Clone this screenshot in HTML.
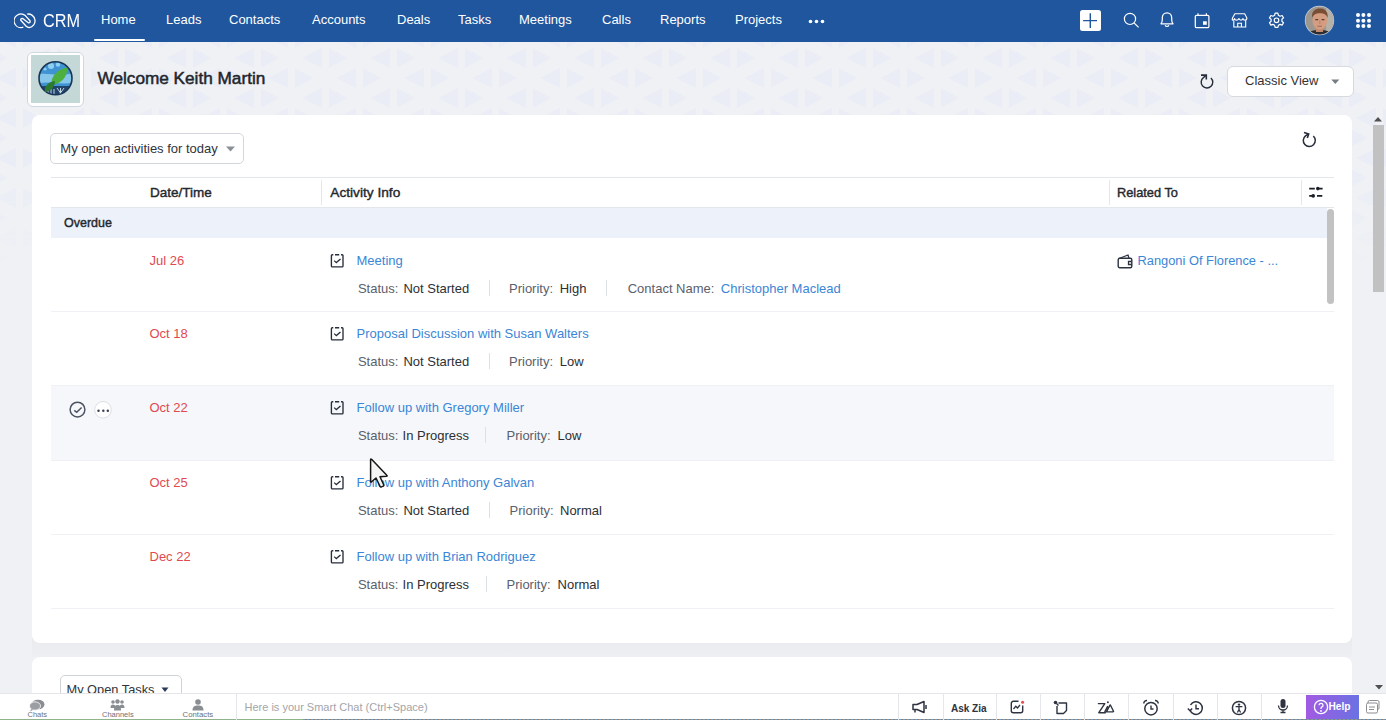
<!DOCTYPE html>
<html><head><meta charset="utf-8">
<style>
*{margin:0;padding:0;box-sizing:border-box}
html,body{width:1386px;height:720px;overflow:hidden}
body{font-family:"Liberation Sans",sans-serif;background:#eff1f5;position:relative;color:#2c2f35}
.a{position:absolute;white-space:nowrap}
#nav{position:absolute;left:0;top:0;width:1386px;height:42px;background:#1f569e}
.ni{position:absolute;top:12px;font-size:13px;color:#fff;line-height:16px}
#card{position:absolute;left:32px;top:114.5px;width:1320px;height:528px;background:#fff;border-radius:8px}
#card2{position:absolute;left:32px;top:657px;width:1320px;height:80px;background:#fff;border-radius:8px}
.t13{font-size:13px;line-height:16px}
.lnk{color:#3b86d6}
.red{color:#df4a4f}
.lbl{color:#5a606b}
.val{color:#2c2f35}
.row{position:absolute;left:51px;width:1283px;height:74px;border-bottom:1px solid #eceef2}
.sb{-webkit-text-stroke:0.4px #24272d}
.sep{position:absolute;width:1px;height:16px;background:#dde0e5}
</style></head><body>

<svg class="a" style="left:0;top:42px" width="1386" height="220"><defs><pattern id="tri" width="68" height="40" patternUnits="userSpaceOnUse" patternTransform="translate(30,6)"><g fill="#eaedf5"><path d="M0 10L20 0V20Z"/><path d="M27 0L45 10L27 20Z"/><path d="M34 30L54 20V40Z"/><path d="M61 20L79 30L61 40Z"/><path d="M-7 20L11 30L-7 40Z"/></g></pattern><linearGradient id="fade" x1="0" y1="0" x2="0" y2="1"><stop offset="0" stop-color="#fff"/><stop offset="0.6" stop-color="#fff"/><stop offset="1" stop-color="#000"/></linearGradient><mask id="mk"><rect width="1386" height="220" fill="url(#fade)"/></mask></defs><rect width="1386" height="220" fill="url(#tri)" mask="url(#mk)"/></svg>
<div id="nav">
  <svg class="a" style="left:14px;top:13px" width="23" height="16" viewBox="0 0 23 16"><path d="M9.3,14.2 A6.8,6.8 0 1 1 11.3,2.6 L16,7.8 Q16.6,9.7 14.6,9.9 L8.4,5.3 Q6.4,5.3 6.8,7.3 L12.2,13.3 Q13.5,14.6 15.2,14.6 A6.8,6.8 0 1 0 13.2,1.1" fill="none" stroke="#fff" stroke-width="1.3" stroke-linejoin="round"/></svg>
  <div class="a" style="left:42.5px;top:12px;font-size:17.5px;color:#fff;line-height:18px;transform:scaleX(0.93);transform-origin:0 0">CRM</div>
  <div class="ni" style="left:101px">Home</div>
  <div class="a" style="left:94px;top:39px;width:51px;height:2px;background:#fff;border-radius:1px"></div>
  <div class="ni" style="left:166px">Leads</div>
  <div class="ni" style="left:229px">Contacts</div>
  <div class="ni" style="left:312px">Accounts</div>
  <div class="ni" style="left:397px">Deals</div>
  <div class="ni" style="left:458px">Tasks</div>
  <div class="ni" style="left:519px">Meetings</div>
  <div class="ni" style="left:602px">Calls</div>
  <div class="ni" style="left:660px">Reports</div>
  <div class="ni" style="left:735px">Projects</div>
  <svg class="a" style="left:808px;top:19px" width="17" height="5"><circle cx="2.5" cy="2.5" r="1.8" fill="#fff"/><circle cx="8.5" cy="2.5" r="1.8" fill="#fff"/><circle cx="14.5" cy="2.5" r="1.8" fill="#fff"/></svg>
  <div class="a" style="left:1079.5px;top:9.7px;width:21.5px;height:21.7px;background:#fff;border-radius:2.5px"></div>
  <svg class="a" style="left:1079px;top:10px" width="22" height="22"><path d="M11.3 3.3V17.9M4.1 10.6H18" stroke="#1f569e" stroke-width="1.45"/></svg>
  <svg class="a" style="left:1120px;top:10px" width="22" height="22" viewBox="0 0 22 22"><circle cx="10" cy="8.9" r="5.6" fill="none" stroke="#fff" stroke-width="1.2"/><path d="M14 12.9L18.6 17.4" stroke="#fff" stroke-width="1.3"/></svg>
  <svg class="a" style="left:1157px;top:10px" width="20" height="20" viewBox="0 0 20 20"><path d="M4 13.8C5.2 12.6 5.3 11.8 5.3 9.5V7.8C5.3 4.9 7.3 2.9 10 2.9S14.7 4.9 14.7 7.8V9.5C14.7 11.8 14.8 12.6 16 13.8Z" fill="none" stroke="#fff" stroke-width="1.25" stroke-linejoin="round"/><path d="M8.2 15.2A1.9 1.9 0 0 0 11.8 15.2" fill="none" stroke="#fff" stroke-width="1.25"/></svg>
  <svg class="a" style="left:1192px;top:10px" width="20" height="20" viewBox="0 0 20 20"><rect x="3.3" y="5.3" width="13.6" height="12.4" rx="1.3" fill="none" stroke="#fff" stroke-width="1.25"/><path d="M6 3.3V6M14.4 3.3V6" stroke="#fff" stroke-width="1.2"/><rect x="11" y="11.3" width="3.8" height="3.5" fill="#fff"/></svg>
  <svg class="a" style="left:1230.3px;top:10.7px" width="19.5" height="18.6" viewBox="0 0 21 20"><path d="M5.2 3H15.8L18.2 7.5C18.2 9 17.1 9.8 16 9.8C14.9 9.8 14.1 9 14 8C13.8 9 12.9 9.8 11.8 9.8C10.7 9.8 9.8 9 9.6 8C9.4 9 8.6 9.8 7.4 9.8C6.3 9.8 5.1 9 5 8C4.8 9 4 9.8 3 9.8C1.9 9.8 2.6 9 2.7 7.5Z" fill="none" stroke="#fff" stroke-width="1.2" stroke-linejoin="round"/><path d="M4.1 10V17.2H16.9V10" fill="none" stroke="#fff" stroke-width="1.2"/><path d="M8.3 17.2V13.2H12.3V17.2" fill="none" stroke="#fff" stroke-width="1.2"/></svg>
  <svg class="a" style="left:1266px;top:10px" width="21" height="21" viewBox="0 0 21 21"><path d="M9.1 3.2H11.9L12.4 5.3L14.1 6.2L16.1 5.5L17.5 7.9L15.9 9.3V11.3L17.5 12.7L16.1 15.1L14.1 14.4L12.4 15.3L11.9 17.4H9.1L8.6 15.3L6.9 14.4L4.9 15.1L3.5 12.7L5.1 11.3V9.3L3.5 7.9L4.9 5.5L6.9 6.2L8.6 5.3Z" fill="none" stroke="#fff" stroke-width="1.2" stroke-linejoin="round"/><circle cx="10.5" cy="10.3" r="2.3" fill="none" stroke="#fff" stroke-width="1.2"/></svg>
  <svg class="a" style="left:1304px;top:5px" width="31" height="31" viewBox="0 0 31 31"><defs><clipPath id="av"><circle cx="15.5" cy="15.5" r="14"/></clipPath></defs><circle cx="15.5" cy="15.5" r="14.7" fill="#cfd3da"/><g clip-path="url(#av)"><rect width="31" height="31" fill="#9d978f"/><rect x="22" width="9" height="31" fill="#b5b0a8"/><path d="M3 31C4 26 9 25 15.5 25S27 26 28 31Z" fill="#2a2d31"/><path d="M12 22H19V27H12Z" fill="#c28a70"/><ellipse cx="15.8" cy="15.5" rx="7.4" ry="9.2" fill="#d49c80"/><path d="M8 13C7.5 6 11 3.5 16 3.5S24 6 23.8 13C22.5 9.5 20 8.3 16 8.3S9.5 9.5 8 13Z" fill="#7a4e35"/><path d="M11.3 14.6H14.2M17.6 14.6H20.4" stroke="#5c3b2c" stroke-width="1.1"/><path d="M15.8 15.5V19" stroke="#b57a62" stroke-width="0.8"/><path d="M13.5 21.2H18" stroke="#9a5e50" stroke-width="0.9"/></g></svg>
  <svg class="a" style="left:1354px;top:13px" width="18" height="16" viewBox="0 0 18 16"><g fill="#fff"><circle cx="4" cy="2.1" r="2"/><circle cx="9.4" cy="2.1" r="2"/><circle cx="15" cy="2.1" r="2"/><circle cx="4" cy="7.7" r="2"/><circle cx="9.4" cy="7.7" r="2"/><circle cx="15" cy="7.7" r="2"/><circle cx="4" cy="13.1" r="2"/><circle cx="9.4" cy="13.1" r="2"/><circle cx="15" cy="13.1" r="2"/></g></svg>
</div>

<!-- welcome -->
<div class="a" style="left:27px;top:52px;width:57px;height:55px;background:#fff;border:1px solid #cfd7e3;border-radius:6px"></div>
<div class="a" style="left:31px;top:56px;width:48px;height:46px;background:#b9d3d3"></div>
<div class="a sb" style="left:97.5px;top:69px;font-size:17.2px;color:#22252c;line-height:18px;-webkit-text-stroke:0.5px #22252c">Welcome Keith Martin</div>
<div class="a" style="left:1226.5px;top:65.5px;width:127px;height:31px;background:#fff;border:1px solid #d6d9de;border-radius:6px"></div>
<div class="a t13" style="left:1245px;top:73px;color:#333">Classic View</div>

<div class="a" style="left:32px;top:636px;width:1320px;height:21px;background:linear-gradient(#e8eaee,#edeff3)"></div><div id="card"></div>
<div class="a" style="left:50px;top:133px;width:194px;height:31px;border:1px solid #d3d7dd;border-radius:5px;background:#fff"></div>
<div class="a t13" style="left:60.3px;top:141px;color:#30343b">My open activities for today</div>
<svg class="a" style="left:226px;top:146px" width="9" height="6"><path d="M0 0.5H9L4.5 5.5Z" fill="#8a8f98"/></svg>
<svg class="a" style="left:1297px;top:127px" width="24" height="24" viewBox="0 0 24 24"><path d="M16.3 9A6 6 0 1 1 8.5 8.8L11.5 7" fill="none" stroke="#262d3b" stroke-width="1.5"/><path d="M7 5.5L11.7 7L10.3 11" fill="none" stroke="#262d3b" stroke-width="1.6"/></svg>
<div class="a" style="left:51px;top:177px;width:1283px;height:1px;background:#e3e6ea"></div>
<div class="a" style="left:51px;top:207px;width:1283px;height:1px;background:#e3e6ea"></div>
<div class="a" style="left:321px;top:180px;width:1px;height:25px;background:#e3e6ea"></div>
<div class="a" style="left:1109px;top:180px;width:1px;height:25px;background:#e3e6ea"></div>
<div class="a" style="left:1301px;top:180px;width:1px;height:25px;background:#e3e6ea"></div>
<div class="a sb" style="left:150px;top:185px;font-size:13.5px;color:#24272d;line-height:16px">Date/Time</div>
<div class="a sb" style="left:330.3px;top:185px;font-size:13.7px;color:#24272d;line-height:16px">Activity Info</div>
<div class="a sb" style="left:1117px;top:185px;font-size:12.8px;color:#24272d;line-height:16px">Related To</div>
<svg class="a" style="left:1308px;top:184px" width="16" height="16" viewBox="0 0 16 16"><path d="M1.2 4.6H6.8M9.6 4.6H14.6M1.2 11.9H5.3M9 11.9H14.3" stroke="#1a1e27" stroke-width="1.6"/><circle cx="9.8" cy="4.6" r="1.8" fill="#1a1e27"/><circle cx="5.2" cy="11.9" r="1.8" fill="#1a1e27"/></svg>
<div class="a" style="left:51px;top:208px;width:1276px;height:30px;background:#ecf1fa"></div>
<div class="a sb" style="left:64px;top:216px;font-size:12.5px;color:#24272d;line-height:14px">Overdue</div>
<div class="a" style="left:51px;top:311px;width:1283px;height:1px;background:#f0f1f4"></div>
<div class="a t13 red" style="left:149.5px;top:253px">Jul 26</div>
<svg class="a" style="left:330px;top:253px" width="15" height="15" viewBox="0 0 15 15"><path d="M3.3 1.7H2.3A0.9 0.9 0 0 0 1.4 2.6V12.9A0.9 0.9 0 0 0 2.3 13.8H12.1A0.9 0.9 0 0 0 13 12.9V2.6A0.9 0.9 0 0 0 12.1 1.7H11M5 1.7H9.2" fill="none" stroke="#262d3b" stroke-width="1.35"/><path d="M4.2 7.6L6.3 9.6L10.5 5.9" fill="none" stroke="#262d3b" stroke-width="1.3"/></svg>
<div class="a t13 lnk" style="left:356.5px;top:253px">Meeting</div>
<div class="a t13 lbl" style="left:357.9px;top:281px">Status:</div>
<div class="a t13 val" style="left:403.4px;top:281px">Not Started</div>
<div class="sep" style="left:488.7px;top:280px"></div>
<div class="a t13 lbl" style="left:509px;top:281px">Priority:</div>
<div class="a t13 val" style="left:559.7px;top:281px">High</div>
<div class="sep" style="left:606px;top:280px"></div>
<div class="a t13 lbl" style="left:627.7px;top:281px">Contact Name:</div>
<div class="a t13 val" style="left:720.8px;top:281px"><span class="lnk">Christopher Maclead</span></div>
<svg class="a" style="left:1117px;top:253px" width="17" height="16" viewBox="0 0 17 16"><path d="M2 5.5L11 2L12 5" fill="none" stroke="#2d3340" stroke-width="1.3"/><rect x="1.2" y="5.2" width="13.6" height="9.6" rx="1.5" fill="none" stroke="#2d3340" stroke-width="1.4"/><path d="M15 8.5H11.5V11.5H15" fill="none" stroke="#2d3340" stroke-width="1.3"/></svg>
<div class="a lnk" style="font-size:12.85px;line-height:16px;left:1137.5px;top:253px">Rangoni Of Florence - ...</div>
<div class="a" style="left:51px;top:385px;width:1283px;height:1px;background:#f0f1f4"></div>
<div class="a t13 red" style="left:149.5px;top:326px">Oct 18</div>
<svg class="a" style="left:330px;top:326px" width="15" height="15" viewBox="0 0 15 15"><path d="M3.3 1.7H2.3A0.9 0.9 0 0 0 1.4 2.6V12.9A0.9 0.9 0 0 0 2.3 13.8H12.1A0.9 0.9 0 0 0 13 12.9V2.6A0.9 0.9 0 0 0 12.1 1.7H11M5 1.7H9.2" fill="none" stroke="#262d3b" stroke-width="1.35"/><path d="M4.2 7.6L6.3 9.6L10.5 5.9" fill="none" stroke="#262d3b" stroke-width="1.3"/></svg>
<div class="a t13 lnk" style="left:356.5px;top:326px">Proposal Discussion with Susan Walters</div>
<div class="a t13 lbl" style="left:357.9px;top:354px">Status:</div>
<div class="a t13 val" style="left:403.4px;top:354px">Not Started</div>
<div class="sep" style="left:488.7px;top:353px"></div>
<div class="a t13 lbl" style="left:509px;top:354px">Priority:</div>
<div class="a t13 val" style="left:559.7px;top:354px">Low</div>
<div class="a" style="left:51px;top:386px;width:1283px;height:74px;background:#f5f7fa"></div>
<div class="a" style="left:51px;top:460px;width:1283px;height:1px;background:#f0f1f4"></div>
<div class="a t13 red" style="left:149.5px;top:400px">Oct 22</div>
<svg class="a" style="left:330px;top:400px" width="15" height="15" viewBox="0 0 15 15"><path d="M3.3 1.7H2.3A0.9 0.9 0 0 0 1.4 2.6V12.9A0.9 0.9 0 0 0 2.3 13.8H12.1A0.9 0.9 0 0 0 13 12.9V2.6A0.9 0.9 0 0 0 12.1 1.7H11M5 1.7H9.2" fill="none" stroke="#262d3b" stroke-width="1.35"/><path d="M4.2 7.6L6.3 9.6L10.5 5.9" fill="none" stroke="#262d3b" stroke-width="1.3"/></svg>
<div class="a t13 lnk" style="left:356.5px;top:400px">Follow up with Gregory Miller</div>
<div class="a t13 lbl" style="left:357.9px;top:428px">Status:</div>
<div class="a t13 val" style="left:402.6px;top:428px">In Progress</div>
<div class="sep" style="left:485.3px;top:427px"></div>
<div class="a t13 lbl" style="left:506.5px;top:428px">Priority:</div>
<div class="a t13 val" style="left:557.6px;top:428px">Low</div>
<svg class="a" style="left:68px;top:400px" width="19" height="19" viewBox="0 0 19 19"><circle cx="9.5" cy="9.6" r="7.4" fill="none" stroke="#4a5160" stroke-width="1.45"/><path d="M6.3 10.4L8.7 12.3L13.6 7.6" fill="none" stroke="#4a5160" stroke-width="1.45"/></svg>
<svg class="a" style="left:94px;top:401px" width="19" height="19" viewBox="0 0 19 19"><circle cx="9" cy="8.8" r="8.3" fill="#fff" stroke="#dcdfe4" stroke-width="1"/><circle cx="4.5" cy="9.8" r="1.25" fill="#3a4150"/><circle cx="9.3" cy="9.8" r="1.25" fill="#3a4150"/><circle cx="13.8" cy="9.8" r="1.25" fill="#3a4150"/></svg>
<div class="a" style="left:51px;top:534px;width:1283px;height:1px;background:#f0f1f4"></div>
<div class="a t13 red" style="left:149.5px;top:475px">Oct 25</div>
<svg class="a" style="left:330px;top:475px" width="15" height="15" viewBox="0 0 15 15"><path d="M3.3 1.7H2.3A0.9 0.9 0 0 0 1.4 2.6V12.9A0.9 0.9 0 0 0 2.3 13.8H12.1A0.9 0.9 0 0 0 13 12.9V2.6A0.9 0.9 0 0 0 12.1 1.7H11M5 1.7H9.2" fill="none" stroke="#262d3b" stroke-width="1.35"/><path d="M4.2 7.6L6.3 9.6L10.5 5.9" fill="none" stroke="#262d3b" stroke-width="1.3"/></svg>
<div class="a t13 lnk" style="left:356.5px;top:475px">Follow up with Anthony Galvan</div>
<div class="a t13 lbl" style="left:357.9px;top:503px">Status:</div>
<div class="a t13 val" style="left:403.4px;top:503px">Not Started</div>
<div class="sep" style="left:488.6px;top:502px"></div>
<div class="a t13 lbl" style="left:509.6px;top:503px">Priority:</div>
<div class="a t13 val" style="left:560px;top:503px">Normal</div>
<div class="a" style="left:51px;top:608px;width:1283px;height:1px;background:#f0f1f4"></div>
<div class="a t13 red" style="left:149.5px;top:549px">Dec 22</div>
<svg class="a" style="left:330px;top:549px" width="15" height="15" viewBox="0 0 15 15"><path d="M3.3 1.7H2.3A0.9 0.9 0 0 0 1.4 2.6V12.9A0.9 0.9 0 0 0 2.3 13.8H12.1A0.9 0.9 0 0 0 13 12.9V2.6A0.9 0.9 0 0 0 12.1 1.7H11M5 1.7H9.2" fill="none" stroke="#262d3b" stroke-width="1.35"/><path d="M4.2 7.6L6.3 9.6L10.5 5.9" fill="none" stroke="#262d3b" stroke-width="1.3"/></svg>
<div class="a t13 lnk" style="left:356.5px;top:549px">Follow up with Brian Rodriguez</div>
<div class="a t13 lbl" style="left:357.9px;top:577px">Status:</div>
<div class="a t13 val" style="left:402.6px;top:577px">In Progress</div>
<div class="sep" style="left:485.5px;top:576px"></div>
<div class="a t13 lbl" style="left:506.5px;top:577px">Priority:</div>
<div class="a t13 val" style="left:557.6px;top:577px">Normal</div>
<div class="a" style="left:1327px;top:209px;width:7px;height:95px;background:#c2c2c2;border-radius:4px"></div>

<div id="card2"></div>


<svg class="a" style="left:1195px;top:68px" width="24" height="24" viewBox="0 0 24 24"><path d="M15.9 9.9A5.8 5.8 0 1 1 8.4 9.6L11.2 7.3" fill="none" stroke="#262d3b" stroke-width="1.4"/><path d="M6 7.1H11.3V11.4" fill="none" stroke="#262d3b" stroke-width="1.6"/></svg>
<svg class="a" style="left:1330.5px;top:78.5px" width="9" height="6"><path d="M0.3 0.5H8.3L4.3 5Z" fill="#777c85"/></svg>
<svg class="a" style="left:31px;top:55px" width="49" height="48" viewBox="0 0 49 48"><rect width="49" height="48" fill="#c4d8d8"/><defs><clipPath id="lg"><circle cx="24.5" cy="23.3" r="16.5"/></clipPath></defs><g clip-path="url(#lg)"><rect width="49" height="48" fill="#3f93d3"/><circle cx="20" cy="11" r="3" fill="#8fd0f2"/><circle cx="27" cy="9.5" r="2.2" fill="#8fd0f2"/><circle cx="14" cy="14" r="1.6" fill="#8fd0f2"/><path d="M6 20C14 16 30 24 44 17V27C32 31 17 25 6 29Z" fill="#85c6ea"/><rect x="0" y="31" width="49" height="17" fill="#22436a"/><path d="M17 40V33M20 40V31M23 40V34M28 40L33 33M31 40L26 33M29.5 33V40" stroke="#d6e6f2" stroke-width="0.9"/></g><circle cx="24.5" cy="23.3" r="16.5" fill="none" stroke="#1b3556" stroke-width="1.6"/><path d="M20.5 30C19.5 22 26 14 36.5 12.5C36.5 22 30 29 20.5 30Z" fill="#4caf3f"/><path d="M14 37C13 31 17 27 24 26C24 32 20 36 14 37Z" fill="#2b7a30"/></svg>

<!-- card2 -->
<div class="a" style="left:59.5px;top:675px;width:122px;height:30px;border:1px solid #cfd3d9;border-radius:5px;background:#fff"></div>
<div class="a" style="left:66.5px;top:682px;font-size:12.8px;line-height:16px;color:#30343b">My Open Tasks</div>
<svg class="a" style="left:161px;top:687px" width="8" height="6"><path d="M0.5 0.5H7.5L4 5Z" fill="#2a3a5a"/></svg>

<!-- page scrollbar -->
<svg class="a" style="left:1373px;top:116px" width="10" height="6"><path d="M1 5.5H9L5 1Z" fill="#505050"/></svg>
<div class="a" style="left:1372.5px;top:124.5px;width:11px;height:167px;background:#c1c1c1"></div>
<svg class="a" style="left:1374px;top:684px" width="10" height="6"><path d="M1 1H9L5 5.5Z" fill="#505050"/></svg>

<!-- bottom bar -->
<div class="a" style="left:0;top:693px;width:1386px;height:27px;background:#fff;border-top:1px solid #e4e6ea"></div>
<div class="a" style="left:0;top:719px;width:303px;height:1px;background:#8fb48c"></div><div class="a" style="left:303px;top:719px;width:1083px;height:1px;background:repeating-linear-gradient(90deg,#6f9cc6 0 2px,#8e7e70 2px 4px)"></div>
<svg class="a" style="left:29px;top:699px" width="16" height="13" viewBox="0 0 16 13"><ellipse cx="9" cy="5.5" rx="6.5" ry="4.8" fill="#8a8d92"/><ellipse cx="6" cy="7" rx="5.5" ry="4.2" fill="#9b9ea3" stroke="#fff" stroke-width="0.8"/><path d="M2 10L1 12.5L4.5 10.5Z" fill="#9b9ea3"/></svg>
<div class="a" style="left:27.5px;top:710px;font-size:7.5px;line-height:9px;color:#6d7178">Chats</div>
<svg class="a" style="left:110px;top:699px" width="15" height="12" viewBox="0 0 15 12"><g fill="#8a8d92"><circle cx="3" cy="3" r="1.8"/><circle cx="12" cy="3" r="1.8"/><circle cx="7.5" cy="2.5" r="2.2"/><path d="M0.5 9C0.5 6 1.5 5.5 3 5.5S5.5 6 5.5 9Z"/><path d="M9.5 9C9.5 6 10.5 5.5 12 5.5S14.5 6 14.5 9Z"/><path d="M4 11.5C4 7 5.5 6 7.5 6S11 7 11 11.5Z"/></g></svg>
<div class="a" style="left:102px;top:710px;font-size:7.5px;line-height:9px;color:#6d7178">Channels</div>
<svg class="a" style="left:191px;top:699px" width="14" height="12" viewBox="0 0 14 12"><g fill="#8a8d92"><circle cx="7" cy="3" r="2.8"/><path d="M1.5 11.5C1.5 7.5 3.5 6.5 7 6.5S12.5 7.5 12.5 11.5Z"/></g></svg>
<div class="a" style="left:182.5px;top:710px;font-size:7.8px;line-height:9px;color:#6d7178">Contacts</div>
<div class="a" style="left:236px;top:694px;width:1px;height:26px;background:#e4e6ea"></div>
<div class="a" style="left:244.5px;top:701px;font-size:11px;line-height:13px;color:#a3a5a9">Here is your Smart Chat (Ctrl+Space)</div>
<div class="a" style="left:897.5px;top:694px;width:1px;height:26px;background:#e4e6ea"></div>
<div class="a" style="left:942.5px;top:694px;width:1px;height:26px;background:#e4e6ea"></div>
<div class="a" style="left:995.5px;top:694px;width:1px;height:26px;background:#e4e6ea"></div>
<div class="a" style="left:1039.5px;top:694px;width:1px;height:26px;background:#e4e6ea"></div>
<div class="a" style="left:1083.5px;top:694px;width:1px;height:26px;background:#e4e6ea"></div>
<div class="a" style="left:1128.3px;top:694px;width:1px;height:26px;background:#e4e6ea"></div>
<div class="a" style="left:1172.5px;top:694px;width:1px;height:26px;background:#e4e6ea"></div>
<div class="a" style="left:1216.6px;top:694px;width:1px;height:26px;background:#e4e6ea"></div>
<div class="a" style="left:1260.6px;top:694px;width:1px;height:26px;background:#e4e6ea"></div>

<svg class="a" style="left:911px;top:700px" width="18" height="14" viewBox="0 0 18 14"><path d="M2 4.5H6L13 1.5V12.5L6 9.5H2Z" fill="none" stroke="#2d3340" stroke-width="1.5" stroke-linejoin="round"/><path d="M4 9.5V12.5M15 5V9" stroke="#2d3340" stroke-width="1.5"/></svg>
<div class="a" style="left:951px;top:703px;font-size:10px;font-weight:bold;line-height:12px;color:#2d3340">Ask Zia</div>
<svg class="a" style="left:1010px;top:700px" width="15" height="14" viewBox="0 0 15 14"><path d="M8.5 1.3H3.3A2 2 0 0 0 1.3 3.3V10.7A2 2 0 0 0 3.3 12.7H10.7A2 2 0 0 0 12.7 10.7V5.5" fill="none" stroke="#2d3340" stroke-width="1.4"/><path d="M3.5 9L5.8 6.2L7.5 8L10 5" fill="none" stroke="#2d3340" stroke-width="1.3"/><circle cx="12.6" cy="2.2" r="1.5" fill="#e8474c"/></svg>
<svg class="a" style="left:1053px;top:700px" width="16" height="16" viewBox="0 0 16 16"><circle cx="2.5" cy="2.5" r="1.8" fill="#2d3340"/><path d="M3.5 3.5L5.5 5.5M5.5 3H13.5V10.5L10.5 13.5H4V6" fill="none" stroke="#2d3340" stroke-width="1.4" stroke-linejoin="round"/></svg>
<svg class="a" style="left:1097px;top:700px" width="18" height="15" viewBox="0 0 18 15"><path d="M1.4 3.6H7.8L1.8 12.7H8.4M7.8 11.8L10.5 6.6M9.4 11.9L13 5.2Q13.2 4.6 13.5 5.2L16.5 11.2Q16.7 11.8 16 11.8Z" fill="none" stroke="#2d3340" stroke-width="1.4" stroke-linejoin="round" stroke-linecap="round"/><circle cx="10.9" cy="2.3" r="0.95" fill="#2d3340"/></svg>
<svg class="a" style="left:1142px;top:699px" width="18" height="18" viewBox="0 0 18 18"><circle cx="9" cy="9.7" r="6.2" fill="none" stroke="#2d3340" stroke-width="1.5"/><path d="M9 6.5V10H11.5" fill="none" stroke="#2d3340" stroke-width="1.4"/><path d="M1.8 4.5A3 3 0 0 1 5 1.5M16.2 4.5A3 3 0 0 0 13 1.5" fill="none" stroke="#2d3340" stroke-width="1.5"/></svg>
<svg class="a" style="left:1186px;top:699px" width="18" height="17" viewBox="0 0 18 17"><path d="M4.5 6A6.3 6.3 0 1 1 4 11" fill="none" stroke="#2d3340" stroke-width="1.5"/><path d="M1.8 9.5L4 11.8L6.2 9.5" fill="none" stroke="#2d3340" stroke-width="1.4"/><path d="M10 5.5V9.8H13" fill="none" stroke="#2d3340" stroke-width="1.4"/></svg>
<svg class="a" style="left:1231px;top:700px" width="16" height="16" viewBox="0 0 16 16"><circle cx="8" cy="8" r="6.6" fill="none" stroke="#2d3340" stroke-width="1.5"/><circle cx="8" cy="4.6" r="1.2" fill="#2d3340"/><path d="M4.6 6.6H11.4M8 6.6V9.6L6.4 12.5M8 9.6L9.6 12.5" fill="none" stroke="#2d3340" stroke-width="1.3"/></svg>
<svg class="a" style="left:1276px;top:698px" width="14" height="16" viewBox="0 0 14 16"><rect x="4.5" y="1" width="5" height="9" rx="2.5" fill="#2d3340"/><path d="M2.5 7.5A4.5 4.5 0 0 0 11.5 7.5M7 12V14.5M4.5 14.5H9.5" fill="none" stroke="#2d3340" stroke-width="1.3"/></svg>
<div class="a" style="left:1306px;top:695px;width:53px;height:24px;background:linear-gradient(90deg,#a25ae2,#6a72e3)"></div>
<svg class="a" style="left:1313px;top:699px" width="16" height="16" viewBox="0 0 16 16"><circle cx="8" cy="8" r="6.6" fill="none" stroke="#fff" stroke-width="1.3"/><path d="M6 6.3A2 2 0 1 1 8.6 8.2C8 8.5 8 9 8 10" fill="none" stroke="#fff" stroke-width="1.3"/><circle cx="8" cy="12" r="0.9" fill="#fff"/></svg>
<div class="a" style="left:1328.5px;top:701px;font-size:10.2px;font-weight:bold;line-height:12px;color:#fff">Help</div>
<svg class="a" style="left:1365px;top:699px" width="16" height="16" viewBox="0 0 16 16"><rect x="3" y="1.5" width="11" height="9" rx="1.5" fill="#fff" stroke="#8a8d92" stroke-width="1"/><rect x="1.5" y="4" width="11" height="10" rx="1.5" fill="#fff" stroke="#8a8d92" stroke-width="1"/><path d="M4 8H10M4 10.5H9" stroke="#8a8d92" stroke-width="1"/></svg>

<!-- cursor -->
<svg class="a" style="left:368px;top:457px" width="24" height="32" viewBox="0 0 24 32"><path d="M2.6 2.8L2.6 24.3Q2.6 25.6 3.6 24.8L8 21L12 29.3Q12.5 30.3 13.5 29.9L15.3 29.1Q16.2 28.7 15.7 27.7L12 19.7L18.4 19.3Q19.7 19.2 18.8 18.3L3.8 2.6Q2.6 1.5 2.6 2.8Z" fill="#f4f4f4" stroke="#161616" stroke-width="1.5" stroke-linejoin="round"/></svg>
</body></html>
